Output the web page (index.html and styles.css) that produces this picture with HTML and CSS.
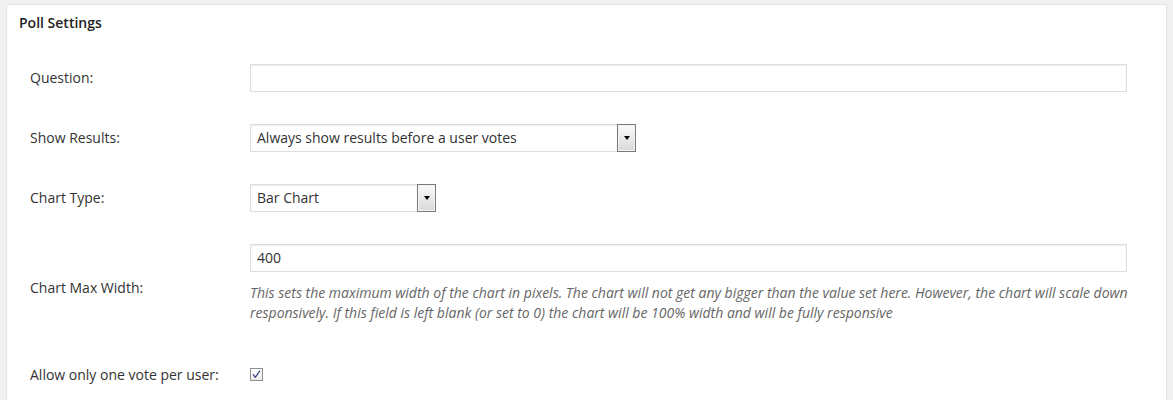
FILE: index.html
```html
<!DOCTYPE html>
<html>
<head>
<meta charset="utf-8">
<link rel="stylesheet" href="styles.css">
</head>
<body>
<div class="postbox">
  <h3 class="postbox-title">Poll Settings</h3>
  <div class="inside">
    <div class="row">
      <div class="label">Question:</div>
      <div class="field"><div class="input"></div></div>
    </div>
    <div class="row">
      <div class="label">Show Results:</div>
      <div class="field">
        <div class="select select-wide">
          <span class="select-text">Always show results before a user votes</span>
          <span class="select-btn"><span class="arrow"></span></span>
        </div>
      </div>
    </div>
    <div class="row">
      <div class="label">Chart Type:</div>
      <div class="field">
        <div class="select select-narrow">
          <span class="select-text">Bar Chart</span>
          <span class="select-btn"><span class="arrow"></span></span>
        </div>
      </div>
    </div>
    <div class="row row-desc">
      <div class="label">Chart Max Width:</div>
      <div class="field">
        <div class="input">400</div>
        <p class="description">This sets the maximum width of the chart in pixels. The chart will not get any bigger than the value set here. However, the chart will scale down responsively. If this field is left blank (or set to 0) the chart will be 100% width and will be fully responsive</p>
      </div>
    </div>
    <div class="row">
      <div class="label">Allow only one vote per user:</div>
      <div class="field">
        <span class="checkbox">
          <svg width="11" height="11" viewBox="0 0 11 11"><path d="M2.3 5.7 L4.3 8.3 L8.7 2" fill="none" stroke="#3e4a86" stroke-width="1.3" stroke-linecap="round" stroke-linejoin="round"/></svg>
        </span>
      </div>
    </div>
  </div>
</div>
</body>
</html>
```
FILE: styles.css
```css
html, body {
  margin: 0;
  padding: 0;
}
body {
  background: #f1f1f1;
  font-family: "Open Sans", "Liberation Sans", sans-serif;
  font-size: 14px;
  color: #444;
}
.postbox {
  margin: 4px 6px 0 6px;
  background: #fff;
  border: 1px solid #e5e5e5;
  box-shadow: 0 1px 1px rgba(0,0,0,0.04);
}
.postbox-title {
  margin: 0;
  padding: 8px 12px;
  font-size: 14px;
  line-height: 19.6px;
  font-weight: 600;
  color: #222;
}
.inside {
  padding: 7px 39px 0 23px;
}
.row {
  display: flex;
  align-items: center;
  padding: 16px 0;
}
.label {
  width: 220px;
  flex: none;
  line-height: 20px;
  color: #333;
}
.field {
  flex: 1;
  min-width: 0;
}
.input {
  box-sizing: border-box;
  height: 28px;
  border: 1px solid #ddd;
  box-shadow: inset 0 1px 2px rgba(0,0,0,0.07);
  background: #fff;
  padding: 0 6px;
  line-height: 26px;
  color: #333;
}
.description {
  margin: 11px -20px 9px 0;
  font-style: italic;
  line-height: 20.5px;
  color: #666;
}
.select {
  display: flex;
  height: 28px;
  box-sizing: border-box;
}
.select-wide { width: 386px; }
.select-narrow { width: 186px; }
.select-text {
  flex: 1;
  border: 1px solid #ddd;
  border-right: none;
  box-shadow: inset 0 1px 2px rgba(0,0,0,0.07);
  padding: 0 6px;
  line-height: 26px;
  color: #333;
  white-space: nowrap;
  overflow: hidden;
}
.select-btn {
  flex: none;
  width: 19px;
  box-sizing: border-box;
  border: 1px solid #7a7a7a;
  box-shadow: inset 0 0 0 1px #f4f4f4;
  background: linear-gradient(#fbfbfb, #d9d9d9);
  display: flex;
  align-items: center;
  justify-content: center;
}
.arrow {
  width: 0;
  height: 0;
  border-left: 3.5px solid transparent;
  border-right: 3.5px solid transparent;
  border-top: 4px solid #000;
}
.checkbox {
  display: flex;
  align-items: center;
  justify-content: center;
  width: 13px;
  height: 13px;
  box-sizing: border-box;
  border: 1px solid #8e8e8e;
  background: linear-gradient(#fff, #ececec);
}
```
